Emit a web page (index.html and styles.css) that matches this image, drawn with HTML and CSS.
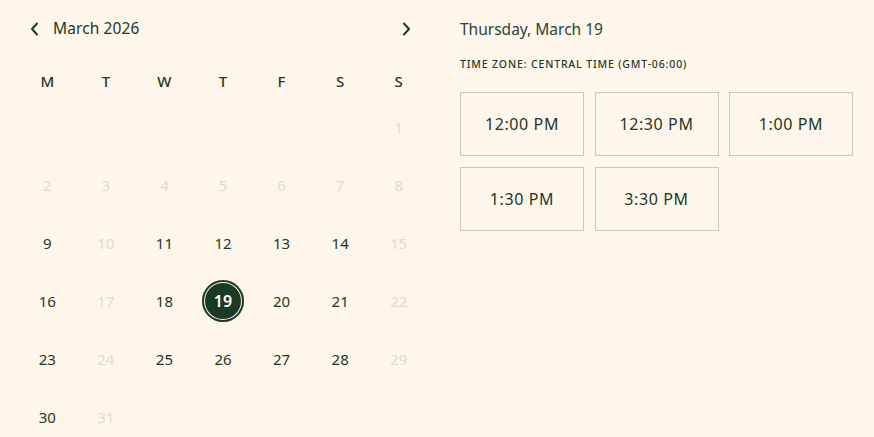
FILE: index.html
```html
<!DOCTYPE html>
<html>
<head>
<meta charset="utf-8">
<link rel="stylesheet" href="styles.css">
</head>
<body>
<div class="page">
  <section class="calendar">
    <div class="cal-header">
      <button class="nav prev" aria-label="Previous month">
        <svg width="12" height="14" viewBox="0 0 12 14"><path d="M8 1.5 L3 7 L8 12.5" fill="none" stroke="#1d3a26" stroke-width="2" stroke-linecap="round" stroke-linejoin="round"/></svg>
      </button>
      <span class="month">March 2026</span>
      <button class="nav next" aria-label="Next month">
        <svg width="12" height="14" viewBox="0 0 12 14"><path d="M4 1.5 L9 7 L4 12.5" fill="none" stroke="#1d3a26" stroke-width="2" stroke-linecap="round" stroke-linejoin="round"/></svg>
      </button>
    </div>
    <div class="weekdays">
      <span>M</span><span>T</span><span>W</span><span>T</span><span>F</span><span>S</span><span>S</span>
    </div>
    <div class="days">
      <span></span><span></span><span></span><span></span><span></span><span></span><span class="off">1</span>
      <span class="off">2</span><span class="off">3</span><span class="off">4</span><span class="off">5</span><span class="off">6</span><span class="off">7</span><span class="off">8</span>
      <span>9</span><span class="off">10</span><span>11</span><span>12</span><span>13</span><span>14</span><span class="off">15</span>
      <span>16</span><span class="off">17</span><span>18</span><span class="sel"><b>19</b></span><span>20</span><span>21</span><span class="off">22</span>
      <span>23</span><span class="off">24</span><span>25</span><span>26</span><span>27</span><span>28</span><span class="off">29</span>
      <span>30</span><span class="off">31</span>
    </div>
  </section>
  <section class="times">
    <h2 class="date-title">Thursday, March 19</h2>
    <p class="tz">Time zone: Central Time (GMT-06:00)</p>
    <div class="slots">
      <button class="slot">12:00 PM</button>
      <button class="slot">12:30 PM</button>
      <button class="slot">1:00 PM</button>
      <button class="slot">1:30 PM</button>
      <button class="slot">3:30 PM</button>
    </div>
  </section>
</div>
</body>
</html>
```
FILE: styles.css
```css
* { box-sizing: border-box; }
html, body { margin: 0; padding: 0; }
body {
  background: #fef5eb;
  color: #1d3a26;
  font-family: "Noto Sans", "Open Sans", sans-serif;
  width: 874px;
  height: 437px;
  overflow: hidden;
}
.page {
  display: flex;
  padding-left: 18px;
}
.calendar {
  width: 410px;
}
.cal-header {
  height: 58px;
  display: flex;
  align-items: center;
  margin-bottom: 6px;
}
.nav {
  background: none;
  border: 0;
  padding: 0;
  width: 12px;
  height: 14px;
  display: flex;
  cursor: pointer;
}
.prev { margin-left: 11px; }
.month {
  margin-left: 12px;
  font-size: 15.5px;
  letter-spacing: 0.1px;
  flex: 1;
  line-height: 1;
}
.next { margin-right: 16px; }
.weekdays, .days {
  display: grid;
  grid-template-columns: repeat(7, 1fr);
}
.weekdays span {
  height: 34px;
  display: flex;
  align-items: center;
  justify-content: center;
  font-size: 15px;
  font-weight: 500;
}
.days span {
  height: 58px;
  display: flex;
  align-items: center;
  justify-content: center;
  font-size: 15px;
}
.days .off { color: #e3dbd1; }
.days .sel b {
  width: 42px;
  height: 42px;
  border-radius: 50%;
  background: #1b3a24;
  color: #fff;
  font-weight: 600;
  display: flex;
  align-items: center;
  justify-content: center;
  box-shadow: inset 0 0 0 2px #1b3a24, inset 0 0 0 3px #fef5eb;
  font-size: 16px;
}
.times {
  margin-left: 32px;
  width: 392px;
}
.date-title {
  margin: 18px 0 0;
  font-size: 15.5px;
  font-weight: 400;
  line-height: 22px;
  color: #2a4632;
}
.tz {
  margin: 17px 0 0;
  font-size: 10.5px;
  line-height: 14px;
  text-transform: uppercase;
  letter-spacing: 0.85px;
  font-weight: 500;
  color: #1d3a26;
}
.slots {
  margin-top: 21px;
  display: grid;
  grid-template-columns: repeat(3, 124px);
  column-gap: 10.5px;
  row-gap: 11px;
}
.slot {
  height: 64px;
  background: none;
  border: 1px solid #cdc7bb;
  font-family: inherit;
  font-size: 16px;
  letter-spacing: 0.6px;
  color: #1d3a26;
  padding: 0;
}
```
